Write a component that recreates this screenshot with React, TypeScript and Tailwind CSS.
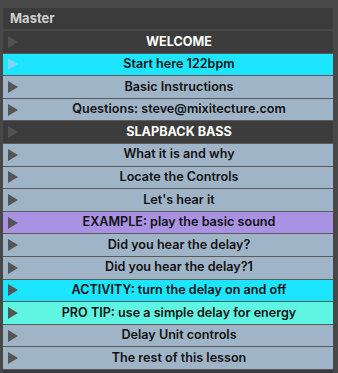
import React from 'react';

type Row = { label: string; kind: 'head' | 'plain' | 'cyan' | 'purple' | 'teal'; selected?: boolean };

const rows: Row[] = [
  { label: 'WELCOME', kind: 'head' },
  { label: 'Start here 122bpm', kind: 'cyan', selected: true },
  { label: 'Basic Instructions', kind: 'plain' },
  { label: 'Questions: steve@mixitecture.com', kind: 'plain' },
  { label: 'SLAPBACK BASS', kind: 'head' },
  { label: 'What it is and why', kind: 'plain' },
  { label: 'Locate the Controls', kind: 'plain' },
  { label: "Let's hear it", kind: 'plain' },
  { label: 'EXAMPLE: play the basic sound', kind: 'purple' },
  { label: 'Did you hear the delay?', kind: 'plain' },
  { label: 'Did you hear the delay?1', kind: 'plain' },
  { label: 'ACTIVITY: turn the delay on and off', kind: 'cyan' },
  { label: 'PRO TIP: use a simple delay for energy', kind: 'teal' },
  { label: 'Delay Unit controls', kind: 'plain' },
  { label: 'The rest of this lesson', kind: 'plain' },
];

const bg: Record<Row['kind'], string> = {
  head: 'bg-[#3c3c3c] text-white font-bold',
  plain: 'bg-[#a0b4c8] text-[#111] font-semibold',
  cyan: 'bg-[#1ce6ff] text-[#111] font-semibold',
  purple: 'bg-[#a992e4] text-[#111] font-semibold',
  teal: 'bg-[#5ef5e2] text-[#111] font-semibold',
};

function Arrow({ color }: { color: string }) {
  return (
    <svg width="10" height="12" viewBox="0 0 10 12" className="shrink-0">
      <path d="M0 0 L10 6 L0 12 Z" fill={color} />
    </svg>
  );
}

export default function App() {
  return (
    <div className="w-[338px] h-[373px] bg-[#484848] pt-[8px] pl-[3px] pr-[5px] overflow-hidden" style={{ fontFamily: 'Inter, "Open Sans", sans-serif' }}>
      {/* Track title */}
      <div className="h-[21px] bg-[#3b3b3b] flex items-center pl-[7px] text-[13px] font-bold text-[#cfcfcf]">
        Master
      </div>
      <div className="mt-[2px] flex flex-col bg-[#3c3c3c]">
        {rows.map((r, i) => (
          <div
            key={i}
            className={`h-[22.6px] flex items-center border-b border-[#5a5a5a] ${bg[r.kind]}`}
          >
            <div className="w-[22px] pl-[5px] flex items-center">
              <Arrow color={r.selected ? '#80d4ff' : r.kind === 'head' ? '#525252' : '#555555'} />
            </div>
            <div className="flex-1 text-center text-[12.6px] leading-none">{r.label}</div>
          </div>
        ))}
        <div className="h-[8px] bg-[#3a3a3a]" />
      </div>
    </div>
  );
}
